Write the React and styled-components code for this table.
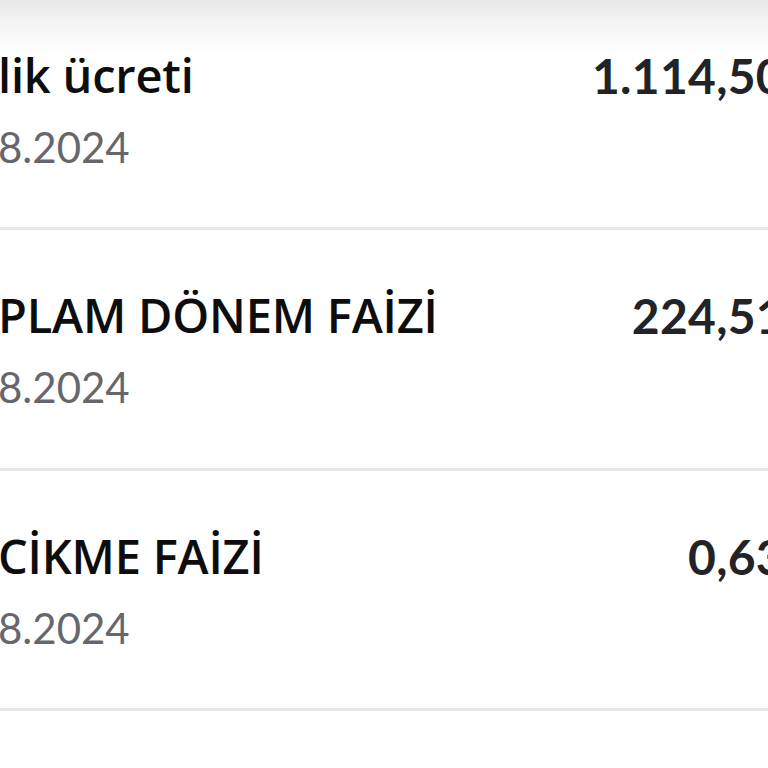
import React from "react";
import styled, { createGlobalStyle } from "styled-components";

const Global = createGlobalStyle`
  html, body { margin: 0; padding: 0; background: #ffffff; overflow: hidden; }
  body { font-family: Lato, "Noto Sans", sans-serif; color: #111; }
`;

const Screen = styled.div`
  position: relative;
  width: 768px;
  height: 768px;
  overflow: hidden;
  background: #fff;
`;

const TopShade = styled.div`
  position: absolute;
  left: 0;
  right: 0;
  top: 0;
  height: 52px;
  background: linear-gradient(#e8e8e8 0%, #f3f3f3 40%, rgba(255,255,255,0) 100%);
  pointer-events: none;
`;

const List = styled.div`
  display: flex;
  flex-direction: column;
  margin: -10px -16px 0 -2px;
`;

const Row = styled.div`
  display: flex;
  justify-content: space-between;
  align-items: flex-start;
  padding: 57px 0 55px;
  border-bottom: 3px solid #e7e7e7;
`;

const Info = styled.div`
  display: flex;
  flex-direction: column;
  gap: 18px;
`;

const Title = styled.div`
  font-family: "Open Sans", Lato, sans-serif;
  font-size: 47px;
  line-height: 57px;
  font-weight: 600;
  letter-spacing: -0.2px;
  color: #0d0d0d;
  white-space: nowrap;
`;

const DateText = styled.div`
  font-size: 42px;
  line-height: 1.2;
  font-weight: 400;
  color: #66676b;
  white-space: nowrap;
`;

const Amount = styled.div`
  font-size: 48px;
  line-height: 1.2;
  font-weight: 700;
  letter-spacing: 0.3px;
  color: #222326;
  white-space: nowrap;
`;

const rows = [
  { title: "lik ücreti", date: "8.2024", amount: "1.114,50" },
  { title: "PLAM DÖNEM FAİZİ", date: "8.2024", amount: "224,51" },
  { title: "CİKME FAİZİ", date: "8.2024", amount: "0,63" },
];

export default function App() {
  return (
    <Screen>
      <Global />
      <List>
        {rows.map((r) => (
          <Row key={r.title}>
            <Info>
              <Title>{r.title}</Title>
              <DateText>{r.date}</DateText>
            </Info>
            <Amount>{r.amount}</Amount>
          </Row>
        ))}
      </List>
      <TopShade />
    </Screen>
  );
}
